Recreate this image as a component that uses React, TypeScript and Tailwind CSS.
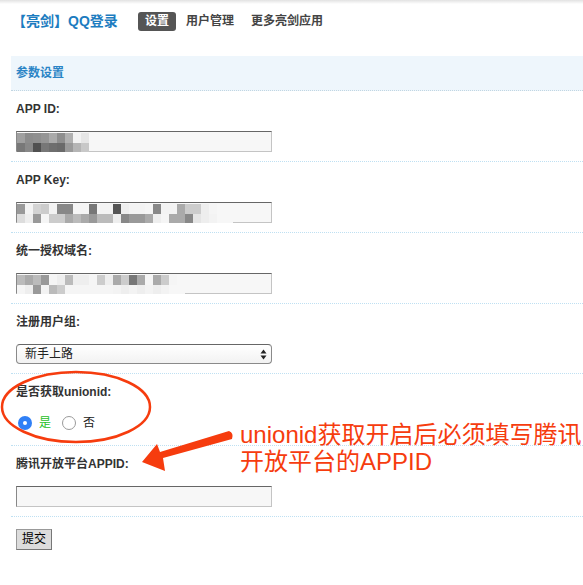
import React from 'react';

const FONT = { fontFamily: '"Liberation Sans", "Noto Sans CJK SC", sans-serif' };

// 打码的色块
const idMosaic = [
  ['#a0a0a0', '#8c8c8c', '#8f8f8f', '#959595', '#aaaaaa', '#8e8e8e', '#b0b0b0', '#f2f2f2', '#e6e6e6'],
  ['#787878', '#888888', '#505050', '#777777', '#6e6e6e', '#6a6a6a', '#9a9a9a', '#b5b5b5', '#c8c8c8'],
];

const keyMosaic = [
  ['#999999', '#f3f3f3', '#d3d3d3', '#cccccc', '#f3f3f3', '#888888', '#888888', '#f5f5f5', '#f5f5f5', '#777777', '#f3f3f3', '#f3f3f3', '#555555', '#eeeeee', '#f3f3f3', '#f3f3f3', '#f5f5f5', '#888888', '#f3f3f3', '#f3f3f3', '#aaaaaa', '#cccccc', '#cccccc', '#eeeeee', '#f5f5f5', '#f7f7f7', '#f7f7f7'],
  ['#dddddd', '#eeeeee', '#999999', '#f5f5f5', '#cccccc', '#cccccc', '#aaaaaa', '#bbbbbb', '#aaaaaa', '#999999', '#bbbbbb', '#bbbbbb', '#eeeeee', '#888888', '#999999', '#999999', '#aaaaaa', '#eeeeee', '#f5f5f5', '#aaaaaa', '#aaaaaa', '#888888', '#e5e5e5', '#eeeeee', '#f3f3f3', '#f7f7f7', '#f7f7f7'],
];

const domainMosaic = [
  ['#bbbbbb', '#aaaaaa', '#bbbbbb', '#999999', '#f5f5f5', '#eeeeee', '#bbbbbb', '#eeeeee', '#eeeeee', '#f5f5f5', '#cccccc', '#eeeeee', '#aaaaaa', '#cccccc', '#777777', '#aaaaaa', '#f5f5f5', '#aaaaaa', '#cccccc', '#f5f5f5', '#f7f7f7'],
  ['#f5f5f5', '#eeeeee', '#999999', '#f3f3f3', '#bbbbbb', '#cccccc', '#f5f5f5', '#f5f5f5', '#f5f5f5', '#f5f5f5', '#f5f5f5', '#f5f5f5', '#f3f3f3', '#eeeeee', '#f3f3f3', '#eeeeee', '#f3f3f3', '#eeeeee', '#f3f3f3', '#f7f7f7', '#f7f7f7'],
];

const Mosaic = ({ rows }: { rows: string[][] }) => (
  <div className="absolute left-[0px] top-[1px] flex flex-col">
    {rows.map((row, i) => (
      <div key={i} className={`flex ${i === 0 ? 'h-[10px]' : 'h-[9px]'}`}>
        {row.map((c, j) => (
          <div key={j} className="w-[8px] h-full" style={{ backgroundColor: c }} />
        ))}
      </div>
    ))}
  </div>
);

const TextInput = ({ mosaic }: { mosaic?: string[][] }) => (
  <div className="relative w-[256px] h-[21px] bg-[#f7f7f7] border border-t-[#666] border-l-[#888] border-r-[#c4c4c4] border-b-[#c4c4c4]">
    {mosaic && <Mosaic rows={mosaic} />}
  </div>
);

const Row = ({ children, last }: { children: React.ReactNode; last?: boolean }) => (
  <div className={`pl-[5px] ${last ? '' : 'border-b border-dotted border-[#bfe0f2]'}`}>
    {children}
  </div>
);

const Label = ({ children }: { children: React.ReactNode }) => (
  <div className="pt-[10px] h-[26px] leading-[16px] text-[12px] font-bold text-[#333]">{children}</div>
);

export default function App() {
  return (
    <div className="relative w-[583px] h-[585px] bg-white overflow-hidden" style={FONT}>
      {/* 顶部阴影 */}
      <div className="h-[4px] bg-gradient-to-b from-[#e2e2e2] to-white" />

      {/* Header */}
      <div className="flex items-center h-[19px] mt-[8px] pl-[12px]">
        <div className="w-[126px] text-[14px] font-bold text-[#1c7cc0] leading-[19px]">【亮剑】QQ登录</div>
        <div className="flex gap-[3px] text-[12px] font-bold leading-[19px]">
          <span className="px-[7px] rounded-[3px] bg-[#555] text-white">设置</span>
          <span className="px-[7px] text-[#444]">用户管理</span>
          <span className="px-[7px] text-[#444]">更多亮剑应用</span>
        </div>
      </div>

      {/* Form */}
      <div className="ml-[11px] mt-[25px]">
        <div className="h-[35px] pl-[5px] flex items-center bg-[#eef6fc] border-b border-dotted border-[#c2d6e2] text-[12px] font-bold text-[#2a84c6]">
          参数设置
        </div>

        <Row>
          <Label>APP ID:</Label>
          <div className="mt-[14px] pb-[9px]">
            <TextInput mosaic={idMosaic} />
          </div>
        </Row>

        <Row>
          <Label>APP Key:</Label>
          <div className="mt-[14px] pb-[9px]">
            <TextInput mosaic={keyMosaic} />
          </div>
        </Row>

        <Row>
          <Label>统一授权域名:</Label>
          <div className="mt-[14px] pb-[9px]">
            <TextInput mosaic={domainMosaic} />
          </div>
        </Row>

        <Row>
          <Label>注册用户组:</Label>
          <div className="mt-[14px] pb-[9px]">
            <div className="relative w-[256px] h-[20px] rounded-[4px] border border-[#8a8a8a] border-t-[#666] bg-gradient-to-b from-white to-[#f2f2f2] flex items-center pl-[8px] text-[12px] text-[#222]">
              新手上路
              <svg className="absolute right-[4px] top-[4px]" width="7" height="11" viewBox="0 0 7 11">
                <path d="M3.5 0.5 L6.5 4.5 L0.5 4.5 Z" fill="#222" />
                <path d="M3.5 10.5 L6.5 6.5 L0.5 6.5 Z" fill="#222" />
              </svg>
            </div>
          </div>
        </Row>

        <Row>
          <Label>是否获取unionid:</Label>
          <div className="mt-[15px] mb-[14px] h-[16px] flex items-center text-[12px]">
            <span className="ml-[2px] w-[14px] h-[14px] rounded-full bg-[#3080f6] flex items-center justify-center">
              <span className="w-[4px] h-[4px] rounded-full bg-white" />
            </span>
            <span className="ml-[7px] text-[#1fbf1f]">是</span>
            <span className="ml-[11px] w-[14px] h-[14px] rounded-full border border-[#9a9a9a] bg-white" />
            <span className="ml-[7px] text-[#222]">否</span>
          </div>
        </Row>

        <Row>
          <Label>腾讯开放平台APPID:</Label>
          <div className="mt-[14px] pb-[9px]">
            <TextInput />
          </div>
        </Row>

        <Row last>
          <div className="pt-[9px]">
            <button className="w-[36px] h-[21px] bg-[#dcdcdc] border border-[#999] border-b-[#777] border-r-[#777] text-[12px] text-black leading-none">
              提交
            </button>
          </div>
        </Row>
      </div>

      {/* 标注: 红圈与箭头 */}
      <svg className="absolute left-0 top-0 pointer-events-none" width="583" height="585">
        <ellipse cx="76" cy="407" rx="74" ry="35" fill="none" stroke="#f63c0e" strokeWidth="2.5" />
        <path
          d="M142 462 L157 444 L160 452 L229 431 Q234 433 232 439 L163 458 L165 471 Z"
          fill="#f63c0e"
        />
      </svg>
      <div
        className="absolute left-[240px] top-[421px] text-[24px] leading-[27px] text-[#f63c0e] whitespace-nowrap"
      >
        <div>unionid获取开启后必须填写腾讯</div>
        <div>开放平台的APPID</div>
      </div>
    </div>
  );
}
